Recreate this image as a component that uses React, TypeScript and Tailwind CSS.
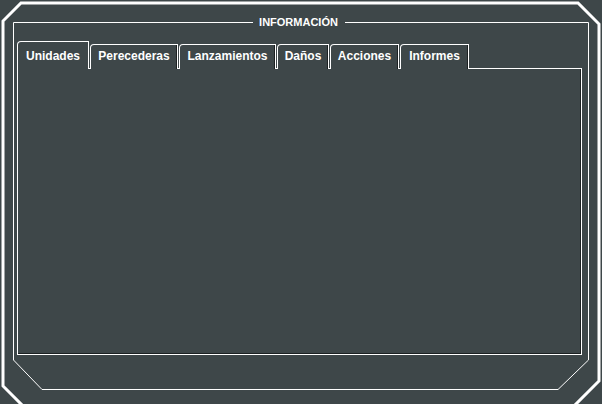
import React, { useState } from 'react';

const tabs = [
  { label: 'Unidades', w: 'w-[72px]' },
  { label: 'Perecederas', w: 'w-[88px]' },
  { label: 'Lanzamientos', w: 'w-[97px]' },
  { label: 'Daños', w: 'w-[52px]' },
  { label: 'Acciones', w: 'w-[69px]' },
  { label: 'Informes', w: 'w-[69px]' },
];

// decorative chamfered frame lines (outer thick octagon + inner thin titled border)
const Frame = () => (
  <svg className="absolute inset-0 pointer-events-none" width="602" height="404" viewBox="0 0 602 404">
    <polygon
      points="21,3 578,3 599,24 599,381 574,406 23,406 3,386 3,21"
      fill="none"
      stroke="#ffffff"
      strokeWidth="3"
    />
    <path
      d="M253 22.5 H13.5 V360 L42 389.5 H558 L588.5 360 V22.5 H345"
      fill="none"
      stroke="#ffffff"
      strokeWidth="1"
    />
  </svg>
);

export default function App() {
  const [active, setActive] = useState(0);

  return (
    <div className="relative w-[602px] h-[404px] overflow-hidden bg-[#3e4749] font-['Liberation_Sans',Arial,sans-serif] text-white">
      <Frame />

      <div className="relative pt-[16px]">
        <div className="h-[12px] pr-[5px] text-center text-[11px] leading-[12px] font-bold">INFORMACIÓN</div>

        <div className="mt-[13px] ml-[17px] mr-[20px]">
          {/* tab strip */}
          <div className="flex items-end gap-[1px] h-[28px]">
            {tabs.map((t, i) =>
              i === active ? (
                <button
                  key={t.label}
                  onClick={() => setActive(i)}
                  className={`${t.w} h-[28px] relative z-10 bg-[#3e4749] border-l border-t border-r border-white rounded-tl-[4px] pt-[8px] text-[12px] leading-[12px] font-bold text-center`}
                >
                  <span className="block">{t.label}</span>
                  <span className="block h-[8px]"></span>
                </button>
              ) : (
                <button
                  key={t.label}
                  onClick={() => setActive(i)}
                  className={`${t.w} h-[25px] flex flex-col items-center bg-[#3e4749] border-l border-t border-r border-white rounded-tl-[4px] pt-[5px] text-[12px] leading-[12px] font-bold shadow-[inset_-1px_0_0_#1c2122]`}
                >
                  {t.label}
                </button>
              )
            )}
          </div>

          {/* content panel */}
          <div className="-mt-px h-[287px] border border-white shadow-[inset_-1px_-1px_0_#1c2122]"></div>
        </div>
      </div>
    </div>
  );
}
